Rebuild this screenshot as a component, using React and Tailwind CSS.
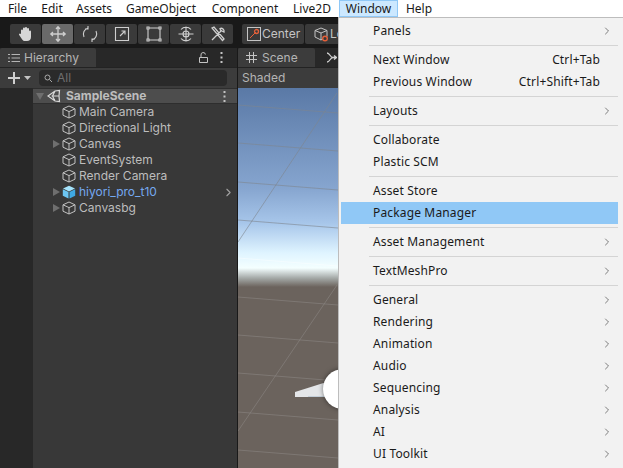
import React from 'react';
import { ChevronRight } from 'lucide-react';

const menuBar = [
  ['File', 'w-[33px]'],
  ['Edit', 'w-[36px]'],
  ['Assets', 'w-[48px]'],
  ['GameObject', 'w-[86px]'],
  ['Component', 'w-[82px]'],
  ['Live2D', 'w-[52px]'],
];

const menu = [
  [{ label: 'Panels', sub: true }],
  [{ label: 'Next Window', key: 'Ctrl+Tab' }, { label: 'Previous Window', key: 'Ctrl+Shift+Tab' }],
  [{ label: 'Layouts', sub: true }],
  [{ label: 'Collaborate' }, { label: 'Plastic SCM' }],
  [{ label: 'Asset Store' }, { label: 'Package Manager', active: true }],
  [{ label: 'Asset Management', sub: true }],
  [{ label: 'TextMeshPro', sub: true }],
  [
    { label: 'General', sub: true },
    { label: 'Rendering', sub: true },
    { label: 'Animation', sub: true },
    { label: 'Audio', sub: true },
    { label: 'Sequencing', sub: true },
    { label: 'Analysis', sub: true },
    { label: 'AI', sub: true },
    { label: 'UI Toolkit', sub: true },
  ],
];

const tree = [
  { label: 'Main Camera' },
  { label: 'Directional Light' },
  { label: 'Canvas', arrow: true },
  { label: 'EventSystem' },
  { label: 'Render Camera' },
  { label: 'hiyori_pro_t10', arrow: true, prefab: true },
  { label: 'Canvasbg', arrow: true },
];

const Cube = ({ solid }) =>
  solid ? (
    <svg width="14" height="14" viewBox="0 0 14 14" className="shrink-0">
      <path d="M7 .8 13 3.600 7 6.400 1 3.600Z" fill="#a5e3fb" />
      <path d="M.8 4.300 6.500 7v6.500L.8 10.700Z" fill="#6cc6f2" />
      <path d="M13.200 4.300 7.500 7v6.500l5.700-2.800Z" fill="#3fa9e4" />
    </svg>
  ) : (
    <svg width="14" height="14" viewBox="0 0 14 14" fill="none" stroke="#c2c2c2" className="shrink-0">
      <path d="M7 1 13 3.800v6.400L7 13 1 10.200V3.800Z" />
      <path d="M1 3.800 7 6.600l6-2.800M7 6.600V13" />
    </svg>
  );

const Triangle = ({ down }) => (
  <svg width="10" height="10" viewBox="0 0 10 10" className="shrink-0">
    <path d={down ? 'M1 2h8L5 9Z' : 'M2 1l7 4-7 4Z'} fill="#6f6f6f" />
  </svg>
);

const Dots = () => (
  <svg width="3" height="11" viewBox="0 0 3 11" fill="#c4c4c4" className="shrink-0">
    <rect x="0.5" y="0" width="2" height="2" />
    <rect x="0.5" y="4.5" width="2" height="2" />
    <rect x="0.5" y="9" width="2" height="2" />
  </svg>
);

const toolIcons = [
  <path key="hand" d="M4 9V5.500a1 1 0 0 1 2 0V3.500a1 1 0 0 1 2 0V3a1 1 0 0 1 2 0v1a1 1 0 0 1 2 0v2.500a1 1 0 0 1 2 0V12c0 2.500-1.500 4-4 4H8.500c-1.700 0-2.700-.5-3.500-1.800L2.200 10c-.7-1.300.8-2.300 1.800-1Z" fill="#d6d6d6" stroke="none" />,
  <path key="move" d="M9 2v14M2 9h14M7 4l2-2.200L11 4M7 14l2 2.200 2-2.200M4 7 1.800 9 4 11M14 7l2.200 2-2.200 2" strokeWidth="1.300" />,
  <path key="rotate" d="M3 12A6.500 6.500 0 0 1 7 3M15 6a6.500 6.500 0 0 1-4 9M7 1v3H4M11 17v-3h3" />,
  <path key="scale" d="M2.500 2.500h13v13h-13ZM7 11l5-5M8.500 6H12v3.500" />,
  <path key="rect" d="M4 3h10M4 15h10M3 4v10M15 4v10M2 2h2v2H2ZM14 2h2v2h-2ZM2 14h2v2H2ZM14 14h2v2h-2Z" />,
  <path key="transform" d="M9 1.500v15M1.500 9h15M4 4.500A6.500 6.500 0 0 1 14 4.500M14 13.500A6.500 6.500 0 0 1 4 13.500M6 9a3 3 0 1 0 6 0 3 3 0 1 0-6 0" />,
  <path key="tools" d="M3 15 12 6M11 3.500a3 3 0 0 1 4 3.500l-2-1-1.500-1ZM3 3l2-1 10 12-1.500 1.500Z" strokeWidth="1.300" />,
];

const App = () => {
  return (
    <div className="relative w-[623px] h-[468px] overflow-hidden bg-[#191919] font-['Inter','Liberation_Sans',sans-serif]">
      {/* windows menu bar */}
      <div className="flex h-[17px] items-center bg-white text-[12px] text-[#1a1a1a] font-['Noto_Sans',sans-serif] pl-[1px]">
        {menuBar.map(([name, width]) => (
          <div key={name} className={`${width} text-center leading-[17px]`}>
            {name}
          </div>
        ))}
        <div className="ml-[1px] h-[17px] w-[59px] border border-[#90c8f6] bg-[#cce8ff] text-center leading-[15px]">Window</div>
        <div className="w-[42px] text-center leading-[17px]">Help</div>
      </div>

      {/* toolbar */}
      <div className="flex h-[31px] items-start gap-[1px] pl-[10px] pt-[5px] border-t border-[#0f0f0f]">
        {toolIcons.map((icon, i) => (
          <div
            key={i}
            className={`mt-[1px] flex h-[20px] w-[31px] items-center justify-center rounded-[2px] ${i === 1 ? 'bg-[#6a6a6a]' : 'bg-[#3a3a3a]'}`}
          >
            <svg width="18" height="18" viewBox="0 0 18 18" fill="none" stroke="#cfcfcf" strokeWidth="1.100">
              {icon}
            </svg>
          </div>
        ))}
        <div className="ml-[8px] mt-[1px] flex h-[20px] w-[62px] items-center gap-[1px] rounded-[2px] bg-[#3a3a3a] pl-[5px] text-[12px] text-[#c4c4c4]">
          <svg width="14" height="14" viewBox="0 0 14 14" fill="none" className="shrink-0">
            <rect x="0.500" y="0.500" width="13" height="13" stroke="#c4c4c4" />
            <path d="M3 11 9 5" stroke="#e4603a" />
            <circle cx="9.500" cy="4.500" r="2" stroke="#e4603a" strokeWidth="1.300" />
          </svg>
          Center
        </div>
        <div className="mt-[1px] flex h-[20px] flex-1 items-center gap-[1px] rounded-[2px] bg-[#3a3a3a] pl-[9px] text-[12px] text-[#c4c4c4]">
          <svg width="15" height="15" viewBox="0 0 15 15" fill="none" className="shrink-0">
            <path d="M7 1 13 3.500v6L7 13 1 10V3.500Z" stroke="#c4c4c4" />
            <path d="M1 3.500 7 6l6-2.500M7 6v7" stroke="#c4c4c4" />
            <circle cx="11" cy="11.500" r="2.300" stroke="#e4603a" strokeWidth="1.400" fill="#383838" />
          </svg>
          Lo
        </div>
      </div>

      <div className="flex h-[420px]">
        {/* hierarchy panel */}
        <div className="flex w-[237px] shrink-0 flex-col">
          <div className="flex h-[19px] items-end justify-between bg-[#282828]">
            <div className="flex h-[19px] w-[96px] items-center gap-[4px] rounded-t-[2px] bg-[#3c3c3c] pl-[8px] text-[12px] text-[#b4b4b4]">
              <svg width="12" height="10" viewBox="0 0 12 10" stroke="#b4b4b4" className="shrink-0">
                <path d="M0 1.500h2M3.500 1.500H12M0 5h2M3.500 5H12M0 8.500h2M3.500 8.500H12" />
              </svg>
              Hierarchy
            </div>
            <div className="flex h-[19px] items-center gap-[12px] pr-[14px]">
              <svg width="9" height="11" viewBox="0 0 9 11" fill="none" stroke="#c4c4c4" className="shrink-0">
                <path d="M.500 5.500h8v5h-8ZM2 5.500V3a2.200 2.200 0 0 1 4.400-.5" />
              </svg>
              <Dots />
            </div>
          </div>
          <div className="flex h-[21px] items-center bg-[#3c3c3c] border-t border-[#232323]">
            <svg width="12" height="12" viewBox="0 0 12 12" stroke="#d0d0d0" strokeWidth="2" className="ml-[8px] shrink-0">
              <path d="M6 0v12M0 6h12" />
            </svg>
            <svg width="7" height="4" viewBox="0 0 7 4" fill="#c4c4c4" className="ml-[4px] shrink-0">
              <path d="M0 0h7L3.500 4Z" />
            </svg>
            <div className="ml-[8px] flex h-[16px] w-[188px] items-center gap-[4px] rounded-[4px] bg-[#2a2a2a] pl-[5px] text-[12px] text-[#6e6e6e]">
              <svg width="9" height="9" viewBox="0 0 9 9" fill="none" stroke="#a8a8a8" className="shrink-0">
                <circle cx="3.500" cy="3.500" r="2.500" />
                <path d="M5.500 5.500 8 8" />
              </svg>
              All
            </div>
          </div>

          <div className="flex min-h-0 flex-1">
            <div className="w-[33px] shrink-0 bg-[#282828]" />
            <div className="flex-1 bg-[#383838]">
              <div className="flex h-[16px] items-center bg-[#4d4d4d] border-y border-[#2e2e2e] pr-[11px] text-[12px] font-bold text-[#bdbdbd]">
                <div className="ml-[2px] flex w-[10px] justify-center">
                  <Triangle down />
                </div>
                <svg width="14" height="14" viewBox="0 0 14 14" fill="none" stroke="#d8d8d8" strokeWidth="1.200" className="ml-[2px] shrink-0">
                  <path d="M1 7 8 2l4.500-.5L12 7l.5 5.500L8 12Zm3.500 0H12M8 2 5.500 7 8 12" />
                </svg>
                <span className="ml-[5px] flex-1">SampleScene</span>
                <Dots />
              </div>
              {tree.map((item) => (
                <div key={item.label} className="flex h-[16px] items-center text-[12px]">
                  <div className="ml-[17px] flex w-[11px] justify-center">{item.arrow && <Triangle />}</div>
                  <div className="ml-[1px]">
                    <Cube solid={item.prefab} />
                  </div>
                  <span className={`ml-[3px] flex-1 ${item.prefab ? 'text-[#75a8f0]' : 'text-[#bdbdbd]'}`}>{item.label}</span>
                  {item.prefab && <ChevronRight size={13} strokeWidth={2} className="mr-[2px] text-[#a0a0a0]" />}
                </div>
              ))}
            </div>
          </div>
        </div>

        {/* scene panel */}
        <div className="ml-[1px] flex min-w-0 flex-1 flex-col">
          <div className="flex h-[19px] items-center bg-[#282828]">
            <div className="flex h-[19px] w-[77px] items-center gap-[5px] rounded-t-[2px] bg-[#3c3c3c] pl-[8px] text-[12px] text-[#b4b4b4]">
              <svg width="11" height="11" viewBox="0 0 11 11" stroke="#c4c4c4" className="shrink-0">
                <path d="M3.500 0v11M7.500 0v11M0 3.500h11M0 7.500h11" />
              </svg>
              Scene
            </div>
            <svg width="11" height="11" viewBox="0 0 11 11" fill="none" stroke="#d0d0d0" strokeWidth="1.300" className="ml-[11px] shrink-0">
              <path d="M1 1c3 0 3 4.500 6 4.500M1 10c3 0 3-4.500 6-4.500h3M8 3.500l2.500 2L8 7.500" />
            </svg>
          </div>
          <div className="flex h-[21px] items-center bg-[#3c3c3c] border-t border-[#232323] pl-[4px] text-[12px] text-[#b4b4b4]">Shaded</div>
          <div className="relative flex-1 overflow-hidden bg-[linear-gradient(180deg,#5a79a6_0px,#86a5cf_100px,#a7c6ea_135px,#dff4ff_165px,#f4ffff_180px,#a5aaa8_190px,#6b635d_199px,#6b635d_100%)]">
            <svg width="385" height="380" viewBox="0 0 385 380" fill="none" className="absolute left-0 top-0">
              <g stroke="#7f868e" strokeOpacity="0.600">
                <path d="M0 17 100 25M0 55 100 63M0 94 100 102M0 132 100 140" />
                <path d="M0 170 100 178" stroke="#ffffff" strokeOpacity="0.400" />
                <path d="M0 209 100 217M0 247 100 255M0 285 100 293M0 324 100 332M0 362 100 370" stroke="#8b8582" />
                <path d="M0 154 99 5" />
                <path d="M0 343 99 197" stroke="#8b8582" />
              </g>
            </svg>
            <svg width="60" height="60" viewBox="0 0 60 60" className="absolute left-[45px] top-[268px]">
              <path d="M12 36 50 24V41H12Z" fill="#e4e6e8" />
              <path d="M25 40h25v1H25Z" fill="#c3ced8" />
            </svg>
            <div className="absolute left-[85px] top-[281px] h-[40px] w-[40px] rounded-full bg-white shadow-[0_0_5px_rgba(0,0,0,0.500)]" />
          </div>
        </div>
      </div>

      {/* open window menu */}
      <div className="absolute bottom-0 left-[338px] right-0 top-[17px] border-l border-t border-[#bdbdbd] bg-[#f2f2f2] pt-[2px] pl-[2px] pr-[5px] font-['Noto_Sans',sans-serif] text-[12px] tracking-[0.15px] text-[#1a1a1a]">
        {menu.map((group, i) => (
          <div key={i}>
            {i > 0 && (
              <div className="flex h-[7px] items-center pl-[28px]">
                <div className="h-[1px] flex-1 bg-[#d4d4d4]" />
              </div>
            )}
            {group.map((item) => (
              <div
                key={item.label}
                className={`flex h-[22px] items-center pl-[32px] pr-[5px] ${item.active ? 'bg-[#90c8f6]' : ''}`}
              >
                <span className="flex-1">{item.label}</span>
                {item.key && <span className="mr-[13px]">{item.key}</span>}
                {item.sub && <ChevronRight size={12} strokeWidth={1.500} className="text-[#555555]" />}
              </div>
            ))}
          </div>
        ))}
      </div>
    </div>
  );
};

export default App;
